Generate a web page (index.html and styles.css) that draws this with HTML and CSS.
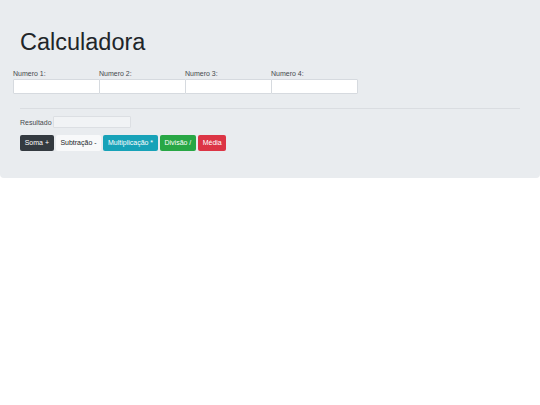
FILE: index.html
```html
<!DOCTYPE html>
<html lang="pt">
<head>
<meta charset="utf-8">
<title>Calculadora</title>
<link rel="stylesheet" href="styles.css">
</head>
<body>
<div class="jumbo">
  <h1 class="title">Calculadora</h1>
  <div class="fields">
    <div class="field"><label class="lbl">Numero 1:</label><input class="num" type="text"></div>
    <div class="field"><label class="lbl">Numero 2:</label><input class="num" type="text"></div>
    <div class="field"><label class="lbl">Numero 3:</label><input class="num" type="text"></div>
    <div class="field"><label class="lbl">Numero 4:</label><input class="num" type="text"></div>
  </div>
  <hr class="sep">
  <div class="result">
    <label class="lbl-res">Resultado</label><input class="res" type="text" readonly>
  </div>
  <div class="buttons">
    <button class="btn btn-dark">Soma +</button>
    <button class="btn btn-light">Subtração -</button>
    <button class="btn btn-info">Multiplicação *</button>
    <button class="btn btn-success">Divisão /</button>
    <button class="btn btn-danger">Média</button>
  </div>
</div>
</body>
</html>
```

FILE: styles.css
```css
html, body {
  margin: 0;
  padding: 0;
  background: #ffffff;
  font-family: "Liberation Sans", Arial, sans-serif;
  color: #212529;
}
.jumbo {
  background: #e9ecef;
  padding: 28px 20px 27px;
  border-radius: 0 0 4px 4px;
}
.title {
  margin: 0 0 12px;
  font-size: 23.5px;
  line-height: 29px;
  font-weight: 400;
  color: #212529;
}
.fields {
  display: flex;
  margin: 0 -7px;
}
.field {
  display: flex;
  flex-direction: column;
  width: 86px;
}
.lbl {
  font-size: 7px;
  line-height: 9px;
  margin-bottom: 1px;
  color: #45494d;
}
.num {
  box-sizing: border-box;
  width: 87px;
  height: 15px;
  margin: 0 -1px 0 0;
  padding: 0;
  border: 1px solid #d6dadf;
  background: #ffffff;
  border-radius: 1px;
}
.sep {
  margin: 14px 0 7px;
  border: 0;
  border-top: 1px solid #dadde1;
  height: 0;
}
.result {
  display: flex;
  align-items: center;
  height: 12px;
}
.lbl-res {
  font-size: 7px;
  line-height: 9px;
  color: #45494d;
  margin-right: 1px;
}
.res {
  box-sizing: border-box;
  width: 78px;
  height: 12px;
  margin: 0;
  padding: 0;
  border: 1px solid #dcdfe3;
  background: #f1f3f5;
  border-radius: 1px;
}
.buttons {
  display: flex;
  gap: 2px;
  margin-top: 7px;
}
.btn {
  height: 16px;
  padding: 0 4.7px;
  border: 0;
  border-radius: 2px;
  font-family: "Liberation Sans", Arial, sans-serif;
  font-size: 7px;
  line-height: 16px;
  color: #ffffff;
}
.btn-dark { background: #343a40; }
.btn-light { background: #f8f9fa; color: #212529; }
.btn-info { background: #17a2b8; }
.btn-success { background: #28a745; }
.btn-danger { background: #dc3545; }
```
